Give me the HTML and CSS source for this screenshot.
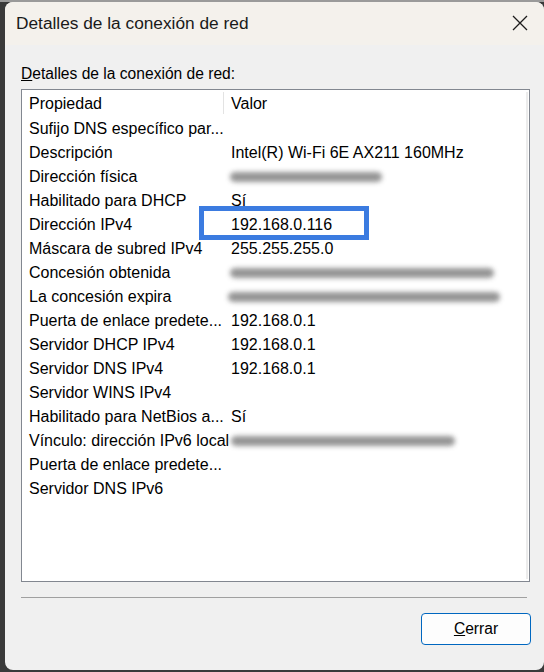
FILE: index.html
```html
<!DOCTYPE html>
<html lang="es">
<head>
<meta charset="utf-8">
<title>Detalles de la conexión de red</title>
<link rel="stylesheet" href="styles.css">
</head>
<body>
<div class="window">
  <div class="titlebar">
    <span class="title">Detalles de la conexión de red</span>
    <svg class="close" width="16" height="16" viewBox="0 0 16 16"><path d="M1 1 L15 15 M15 1 L1 15"/></svg>
  </div>
  <div class="content">
    <div class="label"><u>D</u>etalles de la conexión de red:</div>
    <div class="list">
      <div class="row header"><span class="prop">Propiedad</span><span class="val">Valor</span></div>
      <div class="row"><span class="prop">Sufijo DNS específico par...</span><span class="val"></span></div>
      <div class="row"><span class="prop">Descripción</span><span class="val">Intel(R) Wi-Fi 6E AX211 160MHz</span></div>
      <div class="row"><span class="prop">Dirección física</span><span class="val"><span class="blur b-mac"></span></span></div>
      <div class="row"><span class="prop">Habilitado para DHCP</span><span class="val">Sí</span></div>
      <div class="row"><span class="prop">Dirección IPv4</span><span class="val">192.168.0.116</span></div>
      <div class="row"><span class="prop">Máscara de subred IPv4</span><span class="val">255.255.255.0</span></div>
      <div class="row"><span class="prop">Concesión obtenida</span><span class="val"><span class="blur b-long"></span></span></div>
      <div class="row"><span class="prop">La concesión expira</span><span class="val"><span class="blur b-longer"></span></span></div>
      <div class="row"><span class="prop">Puerta de enlace predete...</span><span class="val">192.168.0.1</span></div>
      <div class="row"><span class="prop">Servidor DHCP IPv4</span><span class="val">192.168.0.1</span></div>
      <div class="row"><span class="prop">Servidor DNS IPv4</span><span class="val">192.168.0.1</span></div>
      <div class="row"><span class="prop">Servidor WINS IPv4</span><span class="val"></span></div>
      <div class="row"><span class="prop">Habilitado para NetBios a...</span><span class="val">Sí</span></div>
      <div class="row"><span class="prop">Vínculo: dirección IPv6 local</span><span class="val"><span class="blur b-v6"></span></span></div>
      <div class="row"><span class="prop">Puerta de enlace predete...</span><span class="val"></span></div>
      <div class="row"><span class="prop">Servidor DNS IPv6</span><span class="val"></span></div>
      <div class="highlight"></div>
      <div class="scroll"></div>
    </div>
    <div class="sep"></div>
    <div class="buttons"><button class="btn"><u>C</u>errar</button></div>
  </div>
</div>
</body>
</html>
```
FILE: styles.css
```css
html, body {
  margin: 0;
  padding: 0;
}
body {
  width: 544px;
  height: 672px;
  overflow: hidden;
  background: linear-gradient(#9a9a9a 0 2px, #3a3a3a 2px);
  font-family: "Liberation Sans", Arial, sans-serif;
  color: #000;
}
.window {
  margin: 2px 0 0 5px;
  width: 539px;
  height: 668px;
  border-radius: 8px;
  background: #f0f0f0;
  overflow: hidden;
  display: flex;
  flex-direction: column;
}
.titlebar {
  height: 43px;
  flex: none;
  background: #f4f1ec;
  display: flex;
  align-items: center;
  justify-content: space-between;
  padding: 0 16px 0 11px;
}
.title {
  font-size: 17.3px;
  color: #1a1a1a;
}
.close {
  display: block;
  margin-top: -2px;
}
.close path {
  stroke: #1c1c1c;
  stroke-width: 1.3;
  fill: none;
}
.content {
  padding-left: 16px;
  display: flex;
  flex-direction: column;
}
.label {
  margin-top: 20px;
  height: 18px;
  line-height: 18px;
  font-size: 15.6px;
}
.list {
  margin-top: 6px;
  width: 509px;
  height: 493px;
  box-sizing: border-box;
  border: 1px solid #828790;
  background: #fff;
  padding-top: 2px;
  position: relative;
}
.row {
  display: grid;
  grid-template-columns: 195px 1fr;
  column-gap: 7px;
  padding-left: 7px;
  height: 24px;
  line-height: 24px;
  font-size: 16px;
  white-space: nowrap;
}
.header {
  margin-bottom: 1px;
}
.header .prop {
  border-right: 1px solid #e3e3e3;
  height: 22px;
}
.val {
  display: flex;
  align-items: center;
}
.blur {
  display: block;
  height: 10px;
  border-radius: 5px;
  background: #8a8a8a;
  filter: blur(2.5px);
  opacity: 0.9;
}
.b-mac { width: 152px; margin-left: -1px; }
.b-long { width: 264px; margin-left: -1px; }
.b-longer { width: 272px; margin-left: -3px; }
.b-v6 { width: 224px; margin-left: 0; }
.highlight {
  position: absolute;
  left: 177px;
  top: 116px;
  width: 170px;
  height: 34px;
  box-sizing: border-box;
  border: 5px solid #3b7be0;
}
.scroll {
  position: absolute;
  right: 1px;
  top: 2px;
  bottom: 2px;
  width: 2px;
  background: #ececec;
}
.sep {
  margin-top: 15px;
  width: 506px;
  height: 1px;
  background: #a0a0a0;
}
.buttons {
  margin-top: 15px;
  width: 510px;
  display: flex;
  justify-content: flex-end;
}
.btn {
  width: 110px;
  height: 32px;
  box-sizing: border-box;
  border: 1px solid #0067c0;
  border-radius: 4px;
  background: #fdfdfd;
  font-family: "Liberation Sans", Arial, sans-serif;
  font-size: 15.6px;
  color: #000;
  padding: 0;
}
```
